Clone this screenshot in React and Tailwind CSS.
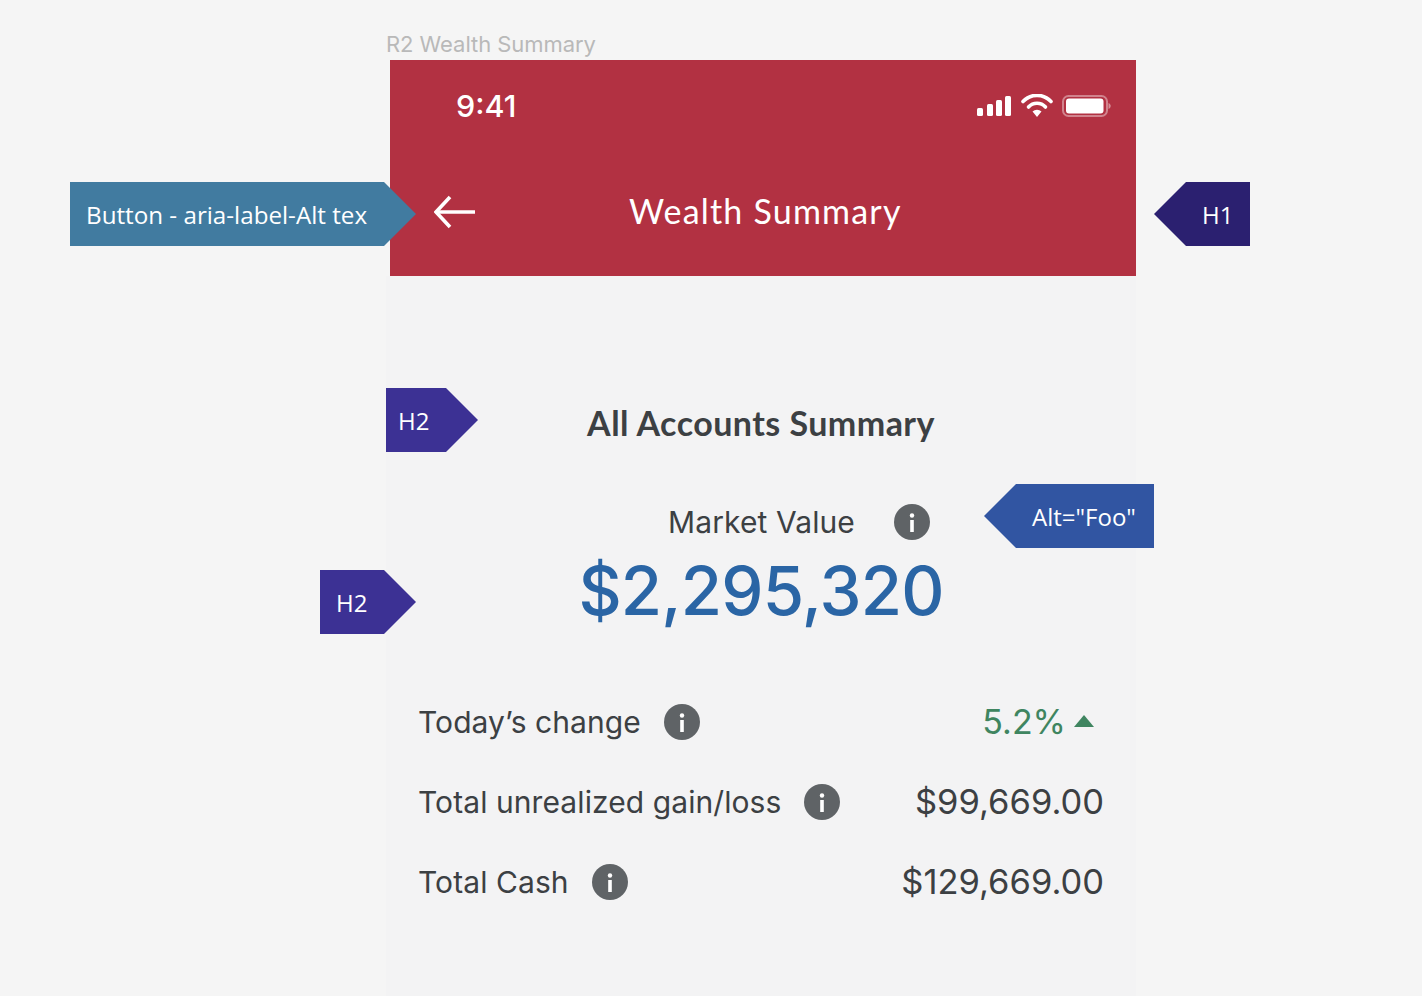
import React from "react";

const Flag = ({ className, children }) => (
    <div className={`absolute flex items-center h-16 pt-[2px] text-white font-['Open_Sans',sans-serif] ${className}`}>
        {children}
    </div>
);

const InfoIcon = () => (
    <svg width="36" height="36" viewBox="0 0 36 36" className="shrink-0">
        <circle cx="18" cy="18" r="18" fill="#5f6366" />
        <circle cx="18" cy="11.5" r="2.2" fill="#fff" />
        <rect x="16.2" y="16" width="3.6" height="12" fill="#fff" />
    </svg>
);

const StatusIcons = () => (
    <svg width="134" height="24" viewBox="0 0 134 24" fill="#fff">
        <rect x="0" y="14" width="6" height="8" rx="1.5" />
        <rect x="10" y="10" width="6" height="12" rx="1.5" />
        <rect x="19" y="6" width="6" height="16" rx="1.5" />
        <rect x="28" y="2" width="6" height="20" rx="1.5" />
        <path d="M46 7.5a19 19 0 0 1 28 0" fill="none" stroke="#fff" strokeWidth="3.6" strokeLinecap="round" />
        <path d="M51.5 13a11.5 11.5 0 0 1 17 0" fill="none" stroke="#fff" strokeWidth="3.6" strokeLinecap="round" />
        <path d="M55.5 17.5a6.5 6.5 0 0 1 9 0L60 23z" />
        <rect x="86" y="2" width="44" height="20" rx="5.5" fill="none" stroke="#fff" strokeOpacity="0.4" strokeWidth="2" />
        <rect x="89" y="4.5" width="37.5" height="15" rx="3" />
        <path d="M131.5 9v6c1.3-.5 2.200-1.700 2.200-3s-.9-2.500-2.200-3z" fill="#fff" fillOpacity="0.45" />
    </svg>
);

const rows = [
    { label: "Today’s change", value: "5.2%", up: true },
    { label: "Total unrealized gain/loss", value: "$99,669.00" },
    { label: "Total Cash", value: "$129,669.00" },
];

const App = () => {
    return (
        <div className="relative h-[996px] overflow-hidden bg-[#f5f5f5] font-['Inter',sans-serif]">
            <div className="h-[60px] pl-[386px] pt-[32px] text-[22px] leading-[25px] tracking-[-0.05px] text-[#b9b9b9]">R2 Wealth Summary</div>

            <div className="ml-[390px] w-[746px]">
                <header className="h-[216px] bg-[#b23142] text-white">
                    <div className="flex h-[92px] items-center justify-between pl-[66px] pr-[25px]">
                        <span className="text-[30.5px] font-medium leading-none">9:41</span>
                        <StatusIcons />
                    </div>
                    <div className="flex h-[120px] items-center gap-[153px] pl-[44px]">
                        <svg width="42" height="34" viewBox="0 0 42 34" fill="none" stroke="#fff" strokeWidth="3.6">
                            <path d="M41 17H3" />
                            <path d="M16 2 2 17l14 15" />
                        </svg>
                        <h1 className="-mt-[2px] font-['Lato',sans-serif] text-[34px] leading-none tracking-[1.2px]">Wealth Summary</h1>
                    </div>
                </header>

                <main className="-ml-[4px] h-[720px] bg-[#f3f3f4] pl-[32px] pr-[32px] text-[#3c4043]">
                    <h2 className="pt-[127px] text-center font-['Lato',sans-serif] text-[34px] font-bold leading-[40px] tracking-[0.45px]">All Accounts Summary</h2>
                    <div className="mt-[61px] flex h-[36px] items-center gap-[39px] pl-[250px] text-[30px] leading-none">
                        <span className="tracking-[0.1px]">Market Value</span>
                        <InfoIcon />
                    </div>
                    <div className="mt-[17px] text-center text-[67px] font-[450] leading-[68px] tracking-[-0.8px] text-[#2a65a5]">$2,295,320</div>

                    <div className="mt-[79px] flex flex-col gap-[44px]">
                        {rows.map((row) => (
                            <div key={row.label} className="flex h-[36px] items-center justify-between text-[30px] leading-none">
                                <div className="flex items-center gap-[23px]">
                                    <span className="tracking-[0.08px]">{row.label}</span>
                                    <InfoIcon />
                                </div>
                                {row.up ? (
                                    <div className="flex items-center gap-[8px] pr-[10px] text-[#3f8560]">
                                        <span className="text-[34px] leading-none">{row.value}</span>
                                        <svg width="20" height="12" viewBox="0 0 20 12" fill="#3f8560" className="mb-[2px]">
                                            <path d="M10 0 20 12H0z" />
                                        </svg>
                                    </div>
                                ) : (
                                    <span className="pt-[1px] text-[34.5px] leading-none">{row.value}</span>
                                )}
                            </div>
                        ))}
                    </div>
                </main>
            </div>

            {/* annotation flags */}
            <Flag className="left-[70px] top-[182px] w-[346px] bg-[#417ba0] pl-[16px] text-[24.2px] [clip-path:polygon(0_0,314px_0,100%_50%,314px_100%,0_100%)]">
                Button - aria-label-Alt tex
            </Flag>
            <Flag className="left-[1154px] top-[182px] w-[96px] bg-[#2b2070] pl-[48px] text-[24px] [clip-path:polygon(32px_0,100%_0,100%_100%,32px_100%,0_50%)]">
                H1
            </Flag>
            <Flag className="left-[386px] top-[388px] w-[92px] bg-[#3c3194] pl-[12px] text-[24px] [clip-path:polygon(0_0,60px_0,100%_50%,60px_100%,0_100%)]">
                H2
            </Flag>
            <Flag className="left-[984px] top-[484px] w-[170px] bg-[#3155a2] pl-[48px] text-[24px] [clip-path:polygon(32px_0,100%_0,100%_100%,32px_100%,0_50%)]">
                Alt="Foo"
            </Flag>
            <Flag className="left-[320px] top-[570px] w-[96px] bg-[#3c3194] pl-[16px] text-[24px] [clip-path:polygon(0_0,64px_0,100%_50%,64px_100%,0_100%)]">
                H2
            </Flag>
        </div>
    );
};

export default App;
